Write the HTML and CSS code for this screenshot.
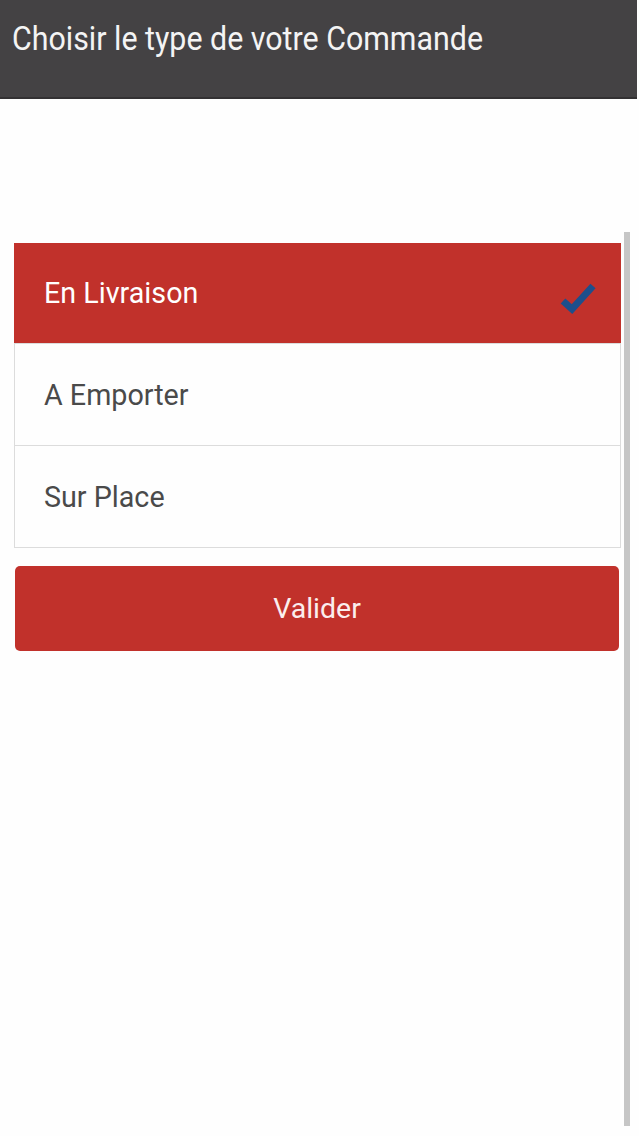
FILE: index.html
```html
<!DOCTYPE html>
<html lang="fr">
<head>
<meta charset="utf-8">
<title>Type de commande</title>
<link rel="stylesheet" href="styles.css">
</head>
<body>
<header class="topbar">
  <h1 class="title">Choisir le type de votre Commande</h1>
</header>
<main class="content">
  <ul class="options">
    <li class="option selected"><span class="label">En Livraison</span>
      <svg class="check" viewBox="0 0 36 32" width="36" height="32"><path d="M3 19 L12 27 L33 4" fill="none" stroke="#1d4f8c" stroke-width="7" stroke-linejoin="miter"/></svg>
    </li>
    <li class="option"><span class="label">A Emporter</span></li>
    <li class="option"><span class="label">Sur Place</span></li>
  </ul>
  <button class="validate" type="button"><span class="label">Valider</span></button>
</main>
<div class="scrollbar"></div>
</body>
</html>
```
FILE: styles.css
```css
html, body {
  margin: 0;
  padding: 0;
  background: #fefefe;
  font-family: Roboto, "Noto Sans", sans-serif;
}
.topbar {
  width: 637px;
  height: 97px;
  background: #444244;
  border-bottom: 2px solid #333133;
  box-sizing: content-box;
  display: flex;
  align-items: flex-start;
}
.title {
  margin: 0;
  padding: 20px 0 0 12px;
  font-weight: 400;
  font-size: 33px;
  line-height: 38px;
  color: #f4f4f4;
  white-space: nowrap;
  transform: scaleX(0.92);
  transform-origin: 12px 0;
}
.content {
  padding: 144px 18px 0 14px;
}
.options {
  list-style: none;
  margin: 0;
  padding: 0;
  border: 1px solid #dcdcdc;
  width: 607px;
  box-sizing: border-box;
}
.option {
  height: 102px;
  display: flex;
  align-items: center;
  justify-content: space-between;
  padding: 0 25px 0 29px;
  border-top: 1px solid #dcdcdc;
  font-size: 28.7px;
  color: #4a4a4a;
  box-sizing: border-box;
}
.option:first-child {
  border-top: none;
  height: 100px;
}
.option.selected {
  background: #c1312b;
  color: #ffffff;
  margin: -1px -1px 0 -1px;
  padding-left: 30px;
}
.check {
  display: block;
  margin-top: 10px;
}
.validate {
  display: flex;
  align-items: center;
  justify-content: center;
  margin: 18px 0 0 1px;
  width: 604px;
  height: 85px;
  border: none;
  border-radius: 5px;
  background: #c1312b;
  color: #fbeeee;
  font-family: Roboto, "Noto Sans", sans-serif;
  font-size: 28.5px;
  padding: 0;
}
.scrollbar {
  position: absolute;
  left: 624px;
  top: 232px;
  width: 6px;
  height: 894px;
  background: #c6c6c6;
}
```
